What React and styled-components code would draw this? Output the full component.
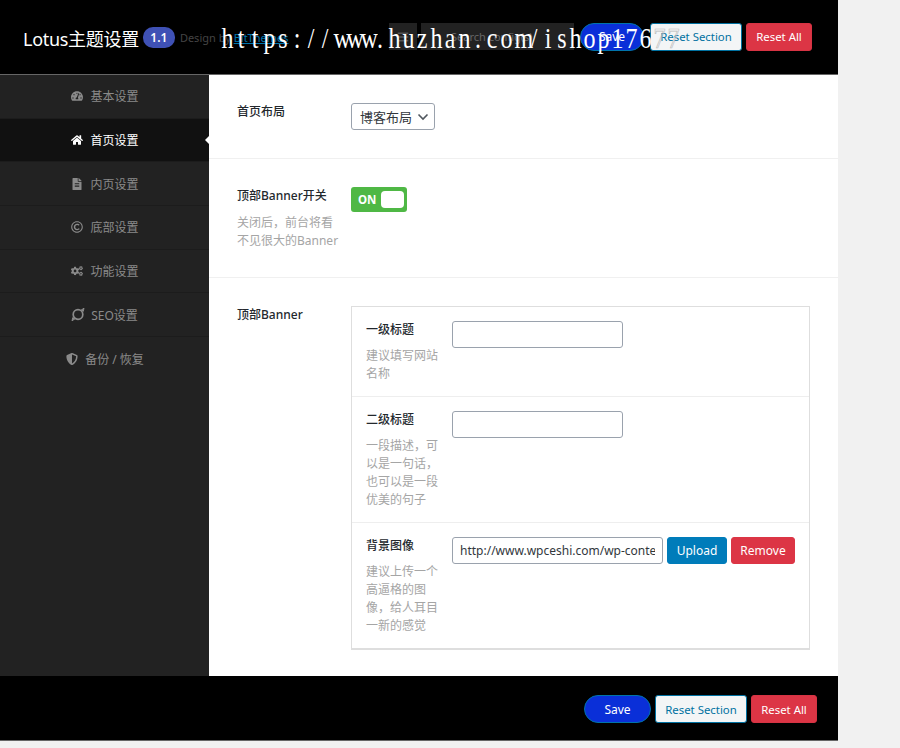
import React from 'react'
import styled, { createGlobalStyle } from 'styled-components'
import { FaTachometerAlt, FaHome, FaFileAlt, FaRegCopyright, FaCogs, FaShieldAlt, FaBars } from 'react-icons/fa'

const FONT = `"Noto Sans", "Open Sans", "Noto Sans CJK SC", sans-serif`

const GlobalStyle = createGlobalStyle`
  html, body {
    margin: 0;
    padding: 0;
    background: #f1f1f1;
    font-family: ${FONT};
  }
  * {
    box-sizing: border-box;
  }
`

const SeoIcon = () => (
  <svg width="14" height="15" viewBox="0 0 14 15" fill="none" stroke="currentColor" strokeWidth="1.7">
    <circle cx="7" cy="7.5" r="4.8" />
    <path d="M10 3.2 L13 1.2 L12.2 4.6 M4 11.8 L1 13.8 L1.8 10.4" fill="currentColor" strokeWidth="1" />
  </svg>
)

const menu = [
  { icon: <FaTachometerAlt />, label: '基本设置' },
  { icon: <FaHome />, label: '首页设置', active: true },
  { icon: <FaFileAlt />, label: '内页设置' },
  { icon: <FaRegCopyright />, label: '底部设置' },
  { icon: <FaCogs />, label: '功能设置' },
  { icon: <SeoIcon />, label: 'SEO设置' },
  { icon: <FaShieldAlt />, label: '备份 / 恢复' },
]

const WATERMARK = 'https://www.huzhan.com/ishop17677'

const App = () => (
  <Page>
    <GlobalStyle />
    <Panel>
      <Header>
        <Brand>
          <Title>Lotus主题设置</Title>
          <Version>1.1</Version>
          <Credit>Design by <a href="#bit">BitThemes</a></Credit>
        </Brand>
        <Toolbar>
          <ExpandButton><FaBars /></ExpandButton>
          <SearchBox placeholder="Search config(s)" />
          <Actions>
            <SaveButton>Save</SaveButton>
            <ResetSection>Reset Section</ResetSection>
            <ResetAll>Reset All</ResetAll>
          </Actions>
        </Toolbar>
        <Watermark>
          {WATERMARK.split('').map((c, i) => (
            <WatermarkChar key={i} $outlined={i >= WATERMARK.length - 2}>{c}</WatermarkChar>
          ))}
        </Watermark>
      </Header>
      <Main>
        <Sidebar>
          {menu.map((item) => (
            <MenuItem key={item.label} $active={item.active}>
              <MenuIcon>{item.icon}</MenuIcon>
              {item.label}
            </MenuItem>
          ))}
        </Sidebar>
        <Content>
          <Section>
            <Label>
              <LabelTitle>首页布局</LabelTitle>
            </Label>
            <Select>
              博客布局
              <svg width="12" height="8" viewBox="0 0 12 8" fill="none" stroke="#50575e" strokeWidth="1.6">
                <path d="M1.5 1.5 L6 6 L10.5 1.5" />
              </svg>
            </Select>
          </Section>
          <Section>
            <Label>
              <LabelTitle>顶部Banner开关</LabelTitle>
              <LabelDesc>关闭后，前台将看不见很大的Banner</LabelDesc>
            </Label>
            <Switch>
              ON
              <SwitchKnob />
            </Switch>
          </Section>
          <Section $last>
            <Label>
              <LabelTitle>顶部Banner</LabelTitle>
            </Label>
            <Fieldset>
              <SubRow $minHeight={90}>
                <SubLabel>
                  <LabelTitle>一级标题</LabelTitle>
                  <LabelDesc>建议填写网站名称</LabelDesc>
                </SubLabel>
                <TextInput $width={171} />
              </SubRow>
              <SubRow $minHeight={126}>
                <SubLabel>
                  <LabelTitle>二级标题</LabelTitle>
                  <LabelDesc>一段描述，可以是一句话，也可以是一段优美的句子</LabelDesc>
                </SubLabel>
                <TextInput $width={171} />
              </SubRow>
              <SubRow $last>
                <SubLabel>
                  <LabelTitle>背景图像</LabelTitle>
                  <LabelDesc>建议上传一个高逼格的图像，给人耳目一新的感觉</LabelDesc>
                </SubLabel>
                <UploadRow>
                  <TextInput $width={211} defaultValue="http://www.wpceshi.com/wp-content/uploads/banner.jpg" />
                  <UploadButton>Upload</UploadButton>
                  <RemoveButton>Remove</RemoveButton>
                </UploadRow>
              </SubRow>
            </Fieldset>
          </Section>
        </Content>
      </Main>
      <Footer>
        <Actions>
          <SaveButton $wide>Save</SaveButton>
          <ResetSection>Reset Section</ResetSection>
          <ResetAll>Reset All</ResetAll>
        </Actions>
      </Footer>
    </Panel>
  </Page>
)

const Page = styled.div`
  width: 900px;
  height: 748px;
  overflow: hidden;
  background: #f1f1f1;
`

const Panel = styled.div`
  width: 838px;
`

const Header = styled.div`
  position: relative;
  height: 75px;
  background: #000;
  border-bottom: 1px solid #666;
  display: flex;
  align-items: center;
  justify-content: space-between;
  padding: 0 26px 0 23px;
`

const Brand = styled.div`
  display: flex;
  align-items: center;
  margin-top: 1px;
`

const Title = styled.div`
  color: #fff;
  font-size: 18px;
  letter-spacing: -0.3px;
`

const Version = styled.span`
  margin-left: 4px;
  width: 32px;
  height: 21px;
  border-radius: 10px;
  background: #3f51b5;
  color: #fff;
  font-size: 12px;
  font-weight: 600;
  display: flex;
  align-items: center;
  justify-content: center;
`

const Credit = styled.span`
  margin-left: 5px;
  font-size: 11px;
  color: #444;

  a {
    color: #0073aa;
  }
`

const Toolbar = styled.div`
  display: flex;
  align-items: center;
  margin-top: -1px;
`

const ExpandButton = styled.div`
  width: 28px;
  height: 27px;
  background: #222;
  color: #555;
  font-size: 12px;
  display: flex;
  align-items: center;
  justify-content: center;
`

const SearchBox = styled.input`
  width: 153px;
  height: 27px;
  margin: 0 6px 0 4px;
  padding: 0 30px;
  border: 0;
  background: #222;
  font-family: ${FONT};
  font-size: 11px;
  color: #666;

  &::placeholder {
    color: #666;
  }
`

const Actions = styled.div`
  display: flex;
  align-items: center;
  gap: 4px;
`

const Button = styled.button`
  height: 28px;
  border-radius: 3px;
  font-family: ${FONT};
  font-size: 12px;
  padding: 0;
  cursor: pointer;
`

const SaveButton = styled(Button)`
  width: ${(props) => (props.$wide ? '67px' : '64px')};
  margin-right: ${(props) => (props.$wide ? '0' : '2px')};
  background: #0a2fd8;
  border: 1px solid #0073aa;
  border-radius: 14px;
  color: #fff;
`

const ResetSection = styled(Button)`
  width: 92px;
  font-size: 11.4px;
  background: #f3f5f6;
  border: 1px solid #0071a1;
  color: #0071a1;
`

const ResetAll = styled(Button)`
  width: 66px;
  font-size: 11.4px;
  background: #dc3545;
  border: 1px solid #d63343;
  color: #fff;
`

const Watermark = styled.div`
  position: absolute;
  left: 220px;
  top: 20px;
  display: flex;
  color: #fff;
  font-family: "Liberation Serif", serif;
  font-size: 30px;
  line-height: 36px;
  white-space: nowrap;
  pointer-events: none;
`

const WatermarkChar = styled.span`
  display: inline-block;
  width: 13.95px;
  text-align: center;
  transform: scaleX(0.8);
  color: ${(props) => (props.$outlined ? 'transparent' : '#fff')};
  -webkit-text-stroke: ${(props) => (props.$outlined ? '0.7px #bbb' : '0')};
`

const Main = styled.div`
  display: flex;
  height: 601px;
`

const Sidebar = styled.div`
  width: 209px;
  background: #222;
`

const MenuItem = styled.div`
  position: relative;
  height: 43.7px;
  display: flex;
  align-items: center;
  justify-content: center;
  font-size: 12px;
  color: ${(props) => (props.$active ? '#fff' : '#8a8a8a')};
  background: ${(props) => (props.$active ? '#111' : 'transparent')};
  border-bottom: 1px solid #1c1c1c;

  &:last-child {
    border-bottom: 0;
  }

  ${(props) =>
    props.$active &&
    `
    &::after {
      content: '';
      position: absolute;
      right: 0;
      top: 17px;
      border: 4px solid transparent;
      border-right-color: #fff;
      border-left-width: 0;
    }
  `}
`

const MenuIcon = styled.span`
  width: 14px;
  margin-right: 6px;
  font-size: 12px;
  display: flex;
  align-items: center;
  justify-content: center;
`

const Content = styled.div`
  flex: 1;
  background: #fff;
`

const Section = styled.div`
  display: grid;
  grid-template-columns: 114px 1fr;
  padding: 28px 28px 27px;
  border-bottom: ${(props) => (props.$last ? '0' : '1px solid #f0f0f0')};
`

const Label = styled.div`
  padding-right: 12px;
`

const LabelTitle = styled.div`
  font-size: 12px;
  font-weight: 500;
  line-height: 18px;
  color: #23282d;
  margin-bottom: 9px;
  white-space: nowrap;
`

const LabelDesc = styled.div`
  font-size: 12px;
  line-height: 18px;
  color: #a5a5a5;
  word-break: break-all;
`

const Select = styled.div`
  width: 84px;
  height: 27px;
  margin-bottom: 1px;
  border: 1px solid #9aa2ad;
  border-radius: 3px;
  padding: 0 5px 0 8px;
  font-size: 13px;
  color: #32373c;
  display: flex;
  align-items: center;
  justify-content: space-between;
`

const Switch = styled.div`
  position: relative;
  width: 56px;
  height: 25px;
  border-radius: 3px;
  background: #4fb845;
  color: #fff;
  font-size: 11.5px;
  font-weight: 700;
  display: flex;
  align-items: center;
  padding-left: 7px;
`

const SwitchKnob = styled.span`
  position: absolute;
  right: 3px;
  top: 4px;
  width: 23px;
  height: 17px;
  border-radius: 4px;
  background: #fff;
`

const Fieldset = styled.div`
  width: 459px;
  border: 1px solid #dedede;
  border-bottom-width: 2px;
`

const SubRow = styled.div`
  display: grid;
  grid-template-columns: 86px 1fr;
  min-height: ${(props) => (props.$minHeight ? `${props.$minHeight}px` : '0')};
  padding: 14px 14px ${(props) => (props.$last ? '13px' : '0')};
  border-bottom: ${(props) => (props.$last ? '0' : '1px solid #eee')};
`

const SubLabel = styled.div`
  padding-right: 10px;

  ${LabelTitle} {
    margin-bottom: 8px;
  }
`

const TextInput = styled.input`
  width: ${(props) => props.$width}px;
  height: 27px;
  border: 1px solid #9aa2ad;
  border-radius: 3px;
  padding: 0 7px;
  background: #fff;
  font-family: ${FONT};
  font-size: 12px;
  color: #32373c;
  outline: none;
`

const UploadRow = styled.div`
  display: flex;
  align-items: flex-start;
  gap: 4px;
`

const UploadButton = styled(Button)`
  width: 60px;
  height: 27px;
  background: #007cba;
  border: 1px solid #007cba;
  color: #fff;
`

const RemoveButton = styled(Button)`
  width: 64px;
  height: 27px;
  background: #dc3545;
  border: 1px solid #dc3545;
  color: #fff;
`

const Footer = styled.div`
  height: 65px;
  background: #000;
  border-bottom: 1px solid #666;
  display: flex;
  align-items: center;
  justify-content: flex-end;
  padding: 2px 21px 0 0;
`

export default App
